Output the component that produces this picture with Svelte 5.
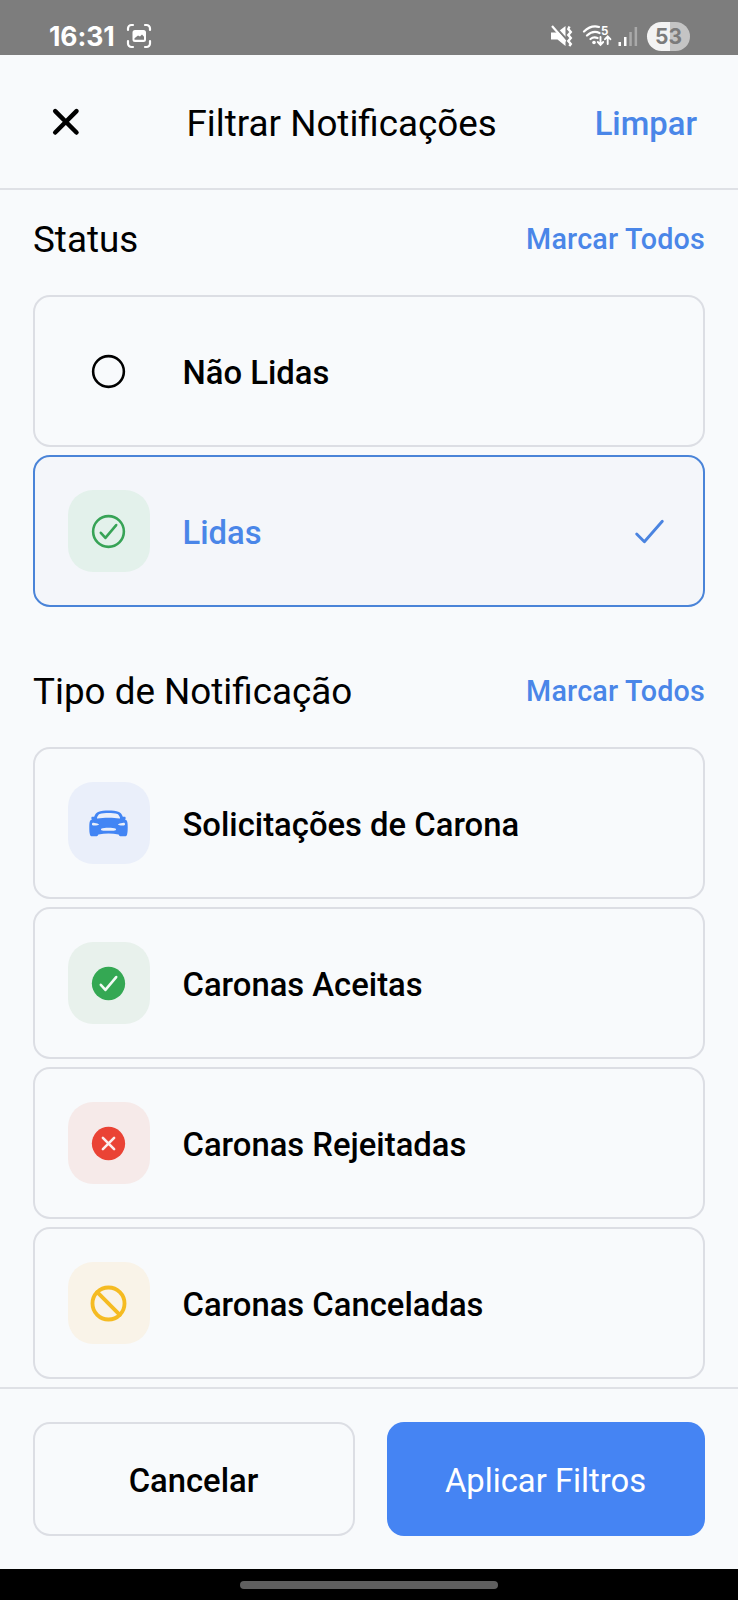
<script>
  const sections = [
    {
      title: 'Status',
      items: [
        { label: 'Não Lidas', icon: 'circle', color: '#000000', tile: 'transparent' },
        { label: 'Lidas', icon: 'check-outline', color: '#37a356', tile: '#e3f1eb', selected: true }
      ]
    },
    {
      title: 'Tipo de Notificação',
      items: [
        { label: 'Solicitações de Carona', icon: 'car', color: '#4285f4', tile: '#eaeffa' },
        { label: 'Caronas Aceitas', icon: 'check', color: '#34a853', tile: '#e8f1ec' },
        { label: 'Caronas Rejeitadas', icon: 'cross', color: '#ea4335', tile: '#f6eae9' },
        { label: 'Caronas Canceladas', icon: 'ban', color: '#f5bb22', tile: '#f9f3e8' }
      ]
    }
  ];
</script>

<div class="screen">
  <div class="statusbar">
    <div class="left">
      <span class="time">16:31</span>
      <svg width="26" height="26" viewBox="0 0 26 26" fill="none" stroke="#fff" stroke-width="2.2" stroke-linecap="round">
        <path d="M2 7V5.5A3.5 3.5 0 0 1 5.500 2H7M19 2h1.500A3.500 3.500 0 0 1 24 5.500V7M24 18v2.500a3.500 3.500 0 0 1-3.500 3.500H19M7 24H5.500A3.500 3.500 0 0 1 2 20.500V18" />
        <path fill="#fff" stroke="none" fill-rule="evenodd" d="M9 7h8.500a2.500 2.500 0 0 1 2.500 2.500v7a2.500 2.500 0 0 1-2.500 2.500H9a2.500 2.500 0 0 1-2.500-2.500v-7A2.500 2.500 0 0 1 9 7ZM8.500 16.800h9.500v-3l-2-2.300-2 2-2-1-3.500 2.800Z" />
      </svg>
    </div>
    <div class="right">
      <svg width="22" height="22" viewBox="0 0 22 22">
        <path fill="#fff" d="M0 7.500h6L14.500 1v20L6.500 14.500H0Z" />
        <path d="M2.500 0 17 16" stroke="#7d7d7d" stroke-width="2.200" />
        <path d="M1 1 14.500 16.500" stroke="#fff" stroke-width="2.200" />
        <path d="M18.500 1.500 17.300 4l2.500 3-2.500 3 2.500 3-2.500 3 2.500 3-1.500 2" fill="none" stroke="#fff" stroke-width="2.400" />
      </svg>
      <svg class="wifi" width="30" height="24" viewBox="0 0 30 24" fill="none" stroke="#fff" stroke-width="2.200" stroke-linecap="round">
        <path d="M2 7.500Q9 .8 17 3M5 11.500Q11 6 17.500 9M8.500 15q3-2.500 7-1" />
        <circle cx="12" cy="18.500" r="1.800" fill="#fff" stroke="none" />
        <path d="M18.500 13v7.500M15.800 18l2.700 2.800 2.700-2.800M25.700 20v-7.500M23 15.200l2.700-2.800 2.700 2.800" stroke-width="1.900" />
        <text x="19" y="11" font-size="11.500" font-weight="700" fill="#fff" stroke="none">5</text>
      </svg>
      <svg class="signal" width="20" height="21" viewBox="0 0 20 21">
        <path fill="#fff" d="M.5 16H3v4H.5ZM6 11h2.500v9H6Z" />
        <path fill="#a9a9a9" d="M11.300 6h2.500v14h-2.500ZM16.600 1h2.500v19h-2.500Z" />
      </svg>
      <span class="battery">53</span>
    </div>
  </div>

  <header>
    <button class="close" aria-label="Fechar">
      <svg width="28" height="28" viewBox="0 0 28 28"><path d="M3.200 3.200 24.500 24.500M24.500 3.200 3.200 24.500" stroke="#000" stroke-width="4.500" stroke-linecap="round" /></svg>
    </button>
    <h1>Filtrar Notificações</h1>
    <button class="clear">Limpar</button>
  </header>

  <main>
    {#each sections as section}
      <section>
        <div class="heading">
          <h2>{section.title}</h2>
          <button class="all">Marcar Todos</button>
        </div>
        <div class="list">
          {#each section.items as item}
            <div class="card" class:selected={item.selected}>
              <span class="tile" style="background: {item.tile}; color: {item.color}">
                <svg width="41" height="41" viewBox="0 0 512 512" fill="none" stroke="currentColor" stroke-linecap="round" stroke-linejoin="round">
                  {#if item.icon === 'circle'}
                    <circle cx="256" cy="256" r="192" stroke-width="32" />
                  {:else if item.icon === 'check-outline'}
                    <circle cx="256" cy="256" r="192" stroke-width="32" />
                    <path d="M352 176 217.600 336 160 272" stroke-width="32" />
                  {:else if item.icon === 'check'}
                    <circle cx="256" cy="256" r="208" fill="currentColor" stroke="none" />
                    <path d="M352 176 217.600 336 160 272" stroke="#f1faf4" stroke-width="32" />
                  {:else if item.icon === 'cross'}
                    <circle cx="256" cy="256" r="208" fill="currentColor" stroke="none" />
                    <path d="M186 186 326 326M326 186 186 326" stroke="#fbeeee" stroke-width="32" />
                  {:else if item.icon === 'ban'}
                    <circle cx="256" cy="256" r="200" stroke-width="48" />
                    <path d="M115 115 397 397" stroke-width="48" />
                  {:else}
                    <path fill="currentColor" stroke="none" fill-rule="evenodd" d="M484 220c-4-6-24-16-24-16 8-2 10-8 10-14 0-12-4-18-14-18h-21c-17-37-26-49-48-59C352 98 300 94 256 94s-96 4-131 19c-22 10-31 22-48 59H56c-10 0-14 6-14 18 0 6 2 12 10 14 0 0-20 10-24 16-8 10-12 40-12 84 0 42 2 68 8 88 4 16 12 24 28 24h44c18 0 28-7 34-24 42-8 84-10 126-10s84 2 126 10c6 17 16 24 34 24h44c16 0 24-8 28-24 6-20 8-46 8-88 0-44-4-74-12-84ZM112 184c8-20 18-41 33-46 28-9 73-13 111-13s83 4 111 13c15 5 25 26 33 46 3 8-2 12-10 10-35-7-82-10-134-10s-99 3-134 10c-8 2-13-2-10-10Zm18 90c-20 6-46 8-66 7-11 0-15-6-14-18 1-12 6-16 18-16 22 1 45 8 62 15 8 4 8 9 0 12Zm204 70c-24 5-132 5-156 0-20-4-20-17-8-25 24-15 148-15 172 0 12 8 12 21-8 25Zm114-63c-20 1-46-1-66-7-8-3-8-8 0-12 17-7 40-14 62-15 12 0 17 4 18 16 1 12-3 18-14 18Z" />
                  {/if}
                </svg>
              </span>
              <span class="label">{item.label}</span>
              {#if item.selected}
                <svg class="tick" width="41" height="41" viewBox="0 0 512 512" fill="none" stroke="#4a84e0" stroke-width="36" stroke-linecap="round" stroke-linejoin="round"><path d="M416 128 192 384 96 288" /></svg>
              {/if}
            </div>
          {/each}
        </div>
      </section>
    {/each}
  </main>

  <footer>
    <button class="cancel">Cancelar</button>
    <button class="apply">Aplicar Filtros</button>
  </footer>
  <div class="navbar"><span></span></div>
</div>

<style>
  :global(body) { background: #f8fafc; }
  .screen {
    width: 738px;
    height: 1600px;
    display: flex;
    flex-direction: column;
    overflow: hidden;
    background: #f8fafc;
    color: #000;
    font-family: Roboto, sans-serif;
  }
  * { box-sizing: border-box; }
  button { font-family: inherit; margin: 0; padding: 0; border: 0; background: none; color: inherit; }
  svg { display: block; flex: none; }
  h1, h2 { margin: 0; font-weight: 400; white-space: nowrap; }

  .statusbar {
    height: 55px;
    flex: none;
    display: flex;
    justify-content: space-between;
    padding: 17px 48px 0 49px;
    background: #7d7d7d;
    color: #fff;
  }
  .left, .right { display: flex; align-items: center; height: 38px; }
  .left { gap: 11px; }
  .time { font: 700 26.500px/38px Inter, sans-serif; letter-spacing: -0.100px; }
  .wifi { margin-left: 9px; font-family: Inter, sans-serif; }
  .signal { margin-left: 6px; }
  .battery {
    width: 43px;
    height: 29px;
    margin-left: 9px;
    border-radius: 15px;
    background: linear-gradient(90deg, #f3f3f3 53%, #c4c4c4 53%);
    color: #7b7b7b;
    font: 700 21px/29px Inter, sans-serif;
    text-align: center;
  }

  header {
    height: 135px;
    flex: none;
    display: flex;
    align-items: center;
    padding: 0 41px 0 52px;
    border-bottom: 2px solid #dfe1e6;
  }
  .close { display: flex; }
  h1 { margin-left: 106.500px; padding-top: 4px; font-size: 36.800px; line-height: 50px; }
  .clear { margin-left: auto; padding-top: 4px; font-size: 32.800px; font-weight: 500; color: #4a86e8; line-height: 50px; }

  main { flex: 1; padding: 0 33px; overflow: hidden; }
  section { height: 452px; }
  .heading {
    height: 105px;
    display: flex;
    align-items: center;
    justify-content: space-between;
    padding-bottom: 5px;
  }
  h2 { font-size: 36.800px; line-height: 50px; }
  .all { padding-bottom: 2px; font-size: 28.700px; font-weight: 500; letter-spacing: 0.200px; color: #4a86e8; line-height: 50px; }
  .list { display: flex; flex-direction: column; gap: 8px; }
  .card {
    height: 152px;
    flex: none;
    display: flex;
    align-items: center;
    padding: 0 33px;
    border: 2px solid #dcdee4;
    border-radius: 17px;
  }
  .selected { border-color: #4a84d8; background: #f4f6fa; color: #4a86e8; }
  .tile {
    width: 82px;
    height: 82px;
    flex: none;
    display: flex;
    align-items: center;
    justify-content: center;
    padding-right: 1px;
    border-radius: 25px;
  }
  .label { flex: 1; margin-left: 32.500px; padding-top: 3px; font-size: 32.800px; font-weight: 500; line-height: 50px; }

  footer {
    height: 182px;
    flex: none;
    display: flex;
    gap: 32px;
    padding: 33px 33px;
    border-top: 2px solid #dfe1e6;
  }
  footer button { height: 114px; padding: 4px 1px 0 0; border-radius: 17px; font-size: 32.800px; }
  .cancel { width: 322px; border: 2px solid #dcdee4; font-weight: 500; }
  .apply { flex: 1; background: #4584f3; color: #fff; }
  .navbar {
    height: 31px;
    flex: none;
    display: flex;
    justify-content: center;
    padding-top: 12px;
    background: #000;
  }
  .navbar span { width: 258px; height: 8px; border-radius: 4px; background: #5f5f5f; }
</style>
